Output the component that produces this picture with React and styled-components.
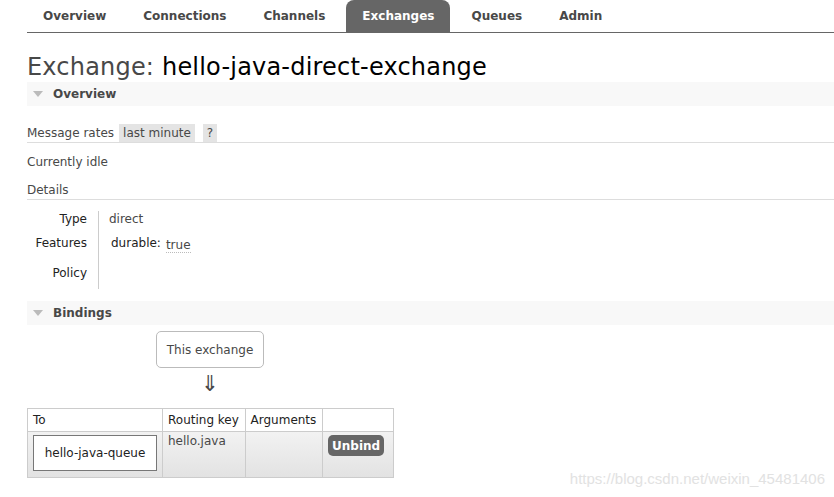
import React from 'react';
import styled, { createGlobalStyle } from 'styled-components';

const GlobalStyle = createGlobalStyle`
  html, body {
    margin: 0;
    padding: 0;
    background: #fff;
  }
  body {
    font-family: "DejaVu Sans", Verdana, sans-serif;
    font-size: 12px;
    color: #484848;
  }
`;

const Page = styled.div`
  position: relative;
  width: 834px;
  height: 497px;
  overflow: hidden;
  padding-left: 27px;
  box-sizing: border-box;
`;

const TabBar = styled.nav`
  display: flex;
  height: 32px;
  border-bottom: 1px solid #666;
`;

const Tab = styled.a`
  display: flex;
  align-items: center;
  height: 32px;
  padding: 0 16px;
  margin-right: 5px;
  font-weight: bold;
  font-size: 12px;
  color: ${(p) => (p.$active ? '#fff' : '#484848')};
  background: ${(p) => (p.$active ? '#666' : 'transparent')};
  border-radius: 8px 8px 0 0;
  text-decoration: none;
`;

const Title = styled.h1`
  margin: 19px 0 0;
  font-size: 24px;
  font-weight: normal;
  line-height: 30px;
  color: #484848;
  letter-spacing: 0.2px;

  b {
    font-weight: normal;
    color: #000;
  }
`;

const SectionHead = styled.div`
  display: flex;
  align-items: center;
  height: 24px;
  margin-top: ${(p) => p.$top || 0}px;
  background: #f8f8f8;
  font-weight: bold;
  font-size: 12px;
  color: #484848;
  gap: 10px;
  padding-left: 6px;
`;

const Triangle = styled.span`
  width: 0;
  height: 0;
  border-left: 5px solid transparent;
  border-right: 5px solid transparent;
  border-top: 6px solid #bbb;
`;

const Line = styled.div`
  display: flex;
  align-items: ${(p) => (p.$bottom ? 'flex-end' : 'center')};
  gap: 3px;
  height: ${(p) => p.$h}px;
  border-bottom: ${(p) => (p.$rule ? '1px solid #ddd' : 'none')};
`;

const Badge = styled.span`
  background: #e4e4e4;
  padding: 1px 4px;
  line-height: 16px;
  margin-left: ${(p) => p.$gap || 0}px;
`;

const DetailGrid = styled.div`
  display: grid;
  grid-template-columns: 72px 1fr;
  margin-top: 11px;
  width: 200px;
`;

const Label = styled.div`
  text-align: right;
  color: #222;
  padding-right: 11px;
  height: ${(p) => p.$h}px;
  line-height: 16px;
  border-right: 1px solid #ccc;
`;

const Value = styled.div`
  padding-left: ${(p) => p.$pad || 10}px;
  height: ${(p) => p.$h}px;
  line-height: 16px;
  color: ${(p) => (p.$dark ? '#222' : '#484848')};
`;

const Dotted = styled.span`
  border-bottom: 1px dotted #bbb;
  position: relative;
  top: 2px;
  margin-left: 5px;
  color: #484848;
`;

const Flow = styled.div`
  width: 366px;
  display: flex;
  flex-direction: column;
  align-items: center;
  margin-top: 6px;
`;

const Node = styled.div`
  border: 1px solid #bbb;
  border-radius: 5px;
  padding: 0 10px;
  height: 35px;
  display: flex;
  align-items: center;
`;

const Arrow = styled.div`
  font-size: 22px;
  line-height: 22px;
  height: 22px;
  margin-top: 5px;
  color: #484848;
`;

const Table = styled.table`
  border-collapse: collapse;
  margin-top: 13px;
  width: 367px;

  th, td {
    border: 1px solid #ccc;
    text-align: left;
    vertical-align: top;
    font-weight: normal;
  }
  th {
    background: #fff;
    color: #222;
    height: 22px;
    padding: 0 5px;
    line-height: 22px;
    white-space: nowrap;
  }
  tbody tr {
    background: linear-gradient(#f2f2f2, #e2e2e2);
  }
  td {
    height: 41px;
    padding: 2px 5px;
  }
`;

const QueueBox = styled.div`
  background: #fff;
  border: 1px solid #777;
  height: 34px;
  display: flex;
  align-items: center;
  justify-content: center;
  color: #222;
  margin: 1px 0 0;
`;

const Unbind = styled.button`
  background: #666;
  color: #fff;
  font-family: inherit;
  font-weight: bold;
  font-size: 12px;
  border: none;
  border-radius: 5px;
  height: 21px;
  padding: 0 4px;
  margin-top: 1px;
`;

const Watermark = styled.div`
  position: absolute;
  right: 9px;
  bottom: 10px;
  font-family: "Liberation Sans", Arial, sans-serif;
  font-size: 15px;
  color: #e2e2e2;
`;

const tabs = ['Overview', 'Connections', 'Channels', 'Exchanges', 'Queues', 'Admin'];

export default function App() {
  return (
    <>
      <GlobalStyle />
      <Page>
        <TabBar>
          {tabs.map((t) => (
            <Tab key={t} $active={t === 'Exchanges'}>{t}</Tab>
          ))}
        </TabBar>
        <Title>
          Exchange: <b>hello-java-direct-exchange</b>
        </Title>
        <SectionHead>
          <Triangle />
          Overview
        </SectionHead>
        <Line $h={36} $rule $bottom>
          <span style={{ lineHeight: '18px', marginRight: 2 }}>Message rates</span>
          <Badge>last minute</Badge>
          <Badge $gap={5}>?</Badge>
        </Line>
        <Line $h={38}>Currently idle</Line>
        <Line $h={18} $rule>Details</Line>
        <DetailGrid>
          <Label $h={24}>Type</Label>
          <Value $h={24}>direct</Value>
          <Label $h={30}>Features</Label>
          <Value $h={30} $pad={12} $dark>durable:<Dotted>true</Dotted></Value>
          <Label $h={24}>Policy</Label>
          <Value $h={24} />
        </DetailGrid>
        <SectionHead $top={12}>
          <Triangle />
          Bindings
        </SectionHead>
        <Flow>
          <Node>This exchange</Node>
          <Arrow>⇓</Arrow>
        </Flow>
        <Table>
          <thead>
            <tr>
              <th style={{ width: 124 }}>To</th>
              <th>Routing key</th>
              <th>Arguments</th>
              <th style={{ width: 60 }}></th>
            </tr>
          </thead>
          <tbody>
            <tr>
              <td><QueueBox>hello-java-queue</QueueBox></td>
              <td>hello.java</td>
              <td></td>
              <td><Unbind>Unbind</Unbind></td>
            </tr>
          </tbody>
        </Table>
        <Watermark>https://blog.csdn.net/weixin_45481406</Watermark>
      </Page>
    </>
  );
}
